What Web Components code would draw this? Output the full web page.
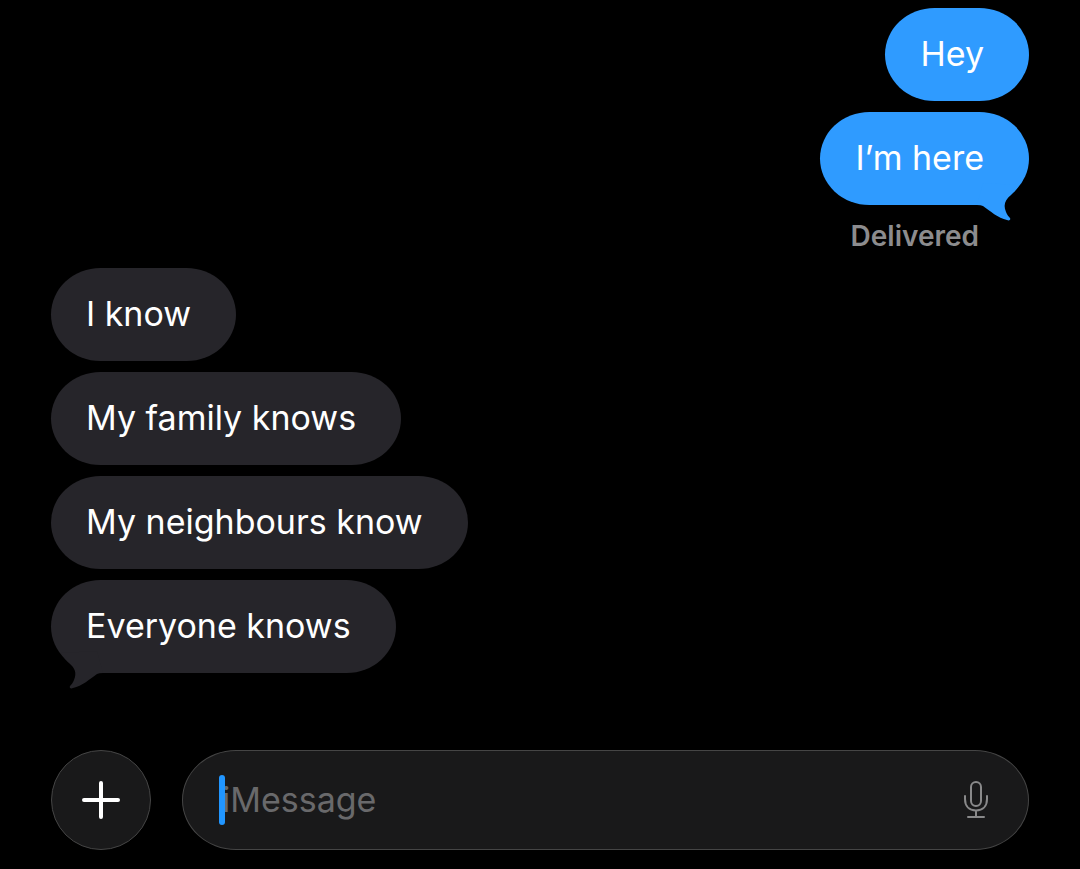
<!DOCTYPE html>
<html lang="en">
<head>
<meta charset="utf-8">
<meta name="viewport" content="width=device-width, initial-scale=1">
<title>Messages</title>
<style>
    body {
        margin: 0;
        background: #000;
        color: #fff;
        font-family: Inter, "Liberation Sans", sans-serif;
    }
</style>
</head>
<body>
<chat-screen>
    <message-group side="sent" status="Delivered">
        <message-bubble side="sent">Hey</message-bubble>
        <message-bubble side="sent" tail>I’m here</message-bubble>
    </message-group>
    <message-group side="received">
        <message-bubble>I know</message-bubble>
        <message-bubble>My family knows</message-bubble>
        <message-bubble>My neighbours know</message-bubble>
        <message-bubble tail>Everyone knows</message-bubble>
    </message-group>
    <message-composer slot="footer"></message-composer>
</chat-screen>

<script>
class ChatScreen extends HTMLElement {
    constructor() {
        super();
        this.attachShadow({mode: 'open'}).innerHTML =
            `<style>
                :host {
                    display: flex;
                    flex-direction: column;
                    justify-content: space-between;
                    gap: 32px;
                    box-sizing: border-box;
                    min-height: 100vh;
                    padding: 8px 51px 19px;
                }

                main {
                    display: flex;
                    flex-direction: column;
                    gap: 15px;
                }
            </style>
            <main><slot></slot></main>
            <slot name="footer"></slot>`;
    }
}

class MessageGroup extends HTMLElement {
    constructor() {
        super();
        this.attachShadow({mode: 'open'});
    }

    connectedCallback() {
        const status = this.getAttribute('status');

        this.shadowRoot.innerHTML =
            `<style>
                :host {
                    display: flex;
                    flex-direction: column;
                    align-items: flex-start;
                    gap: 11px;
                }

                :host([side="sent"]) {
                    align-items: flex-end;
                }

                p {
                    margin: 0;
                    padding: 4px 50px 0 0;
                    font-size: 28px;
                    font-weight: 600;
                    line-height: 33px;
                    color: #8c8c8e;
                }
            </style>
            <slot></slot>
            ${status ? `<p>${status}</p>` : ''}`;
    }
}

class MessageBubble extends HTMLElement {
    constructor() {
        super();
        this.attachShadow({mode: 'open'});
        this.shadowRoot.innerHTML =
            `<style>
                :host {
                    --fill: #26252a;
                    display: block;
                    position: relative;
                    box-sizing: border-box;
                    padding: 26px 45px 27px 35px;
                    border-radius: 50px / 47px;
                    background: var(--fill);
                    font-size: 34px;
                    line-height: 40px;
                }

                :host([side="sent"]) {
                    --fill: #2f9bff;
                }

                svg {
                    display: none;
                    position: absolute;
                    left: 10px;
                    bottom: -16px;
                    fill: var(--fill);
                }

                :host([tail]) svg {
                    display: block;
                }

                :host([side="sent"]) svg {
                    left: auto;
                    right: 10px;
                    transform: scaleX(-1);
                }
            </style>
            <slot></slot>
            <svg width="44" height="38" viewBox="0 0 44 38" aria-hidden="true">
                <path d="M0 2 C3 7 5 9 8 12 C14 17 16 22 13 29 C12 32 10 34 9 35 C8 37 10 38 12 37 C21 35 29 28 36 23 Q38 22 42 22 L36 0 Z"/>
            </svg>`;
    }
}

class MessageComposer extends HTMLElement {
    constructor() {
        super();
        this.attachShadow({mode: 'open'});
        this.shadowRoot.innerHTML =
            `<style>
                :host {
                    display: flex;
                    gap: 31px;
                }

                button {
                    display: grid;
                    place-items: center;
                    padding: 0;
                    border: 0;
                    background: none;
                    color: inherit;
                }

                svg {
                    display: block;
                    fill: none;
                    stroke: currentColor;
                    stroke-linecap: round;
                }

                .add,
                .field {
                    box-sizing: border-box;
                    height: 100px;
                    border: 1px solid #454545;
                    background: #19191a;
                }

                .add {
                    flex: none;
                    width: 100px;
                    border-radius: 50%;
                }

                .field {
                    flex: 1;
                    display: flex;
                    align-items: center;
                    position: relative;
                    min-width: 0;
                    padding: 0 38px 0 39px;
                    border-radius: 54px / 50px;
                }

                .caret {
                    position: absolute;
                    left: 36px;
                    width: 6px;
                    height: 50px;
                    border-radius: 3px;
                    background: #2196ff;
                }

                input {
                    flex: 1;
                    min-width: 0;
                    padding: 0;
                    border: 0;
                    outline: 0;
                    background: none;
                    color: inherit;
                    caret-color: transparent;
                    font: inherit;
                    font-size: 34px;
                    line-height: 40px;
                }

                input::placeholder {
                    color: #69696b;
                    opacity: 1;
                }

                .mic {
                    color: #89898a;
                }
            </style>
            <button class="add" type="button" aria-label="Add">
                <svg width="40" height="40" viewBox="0 0 40 40" stroke-width="4">
                    <path d="M20 3V37M3 20H37"/>
                </svg>
            </button>
            <div class="field">
                <input type="text" placeholder="iMessage" aria-label="iMessage">
                <span class="caret"></span>
                <button class="mic" type="button" aria-label="Dictate">
                    <svg width="28" height="38" viewBox="0 0 28 38" stroke-width="2">
                        <rect x="9" y="1" width="10" height="24" rx="5"/>
                        <path d="M3 15V18C3 25 7 29.500 14 29.500S25 25 25 18V15M14 29.500V36M6 36H22"/>
                    </svg>
                </button>
            </div>`;
    }
}

customElements.define('chat-screen', ChatScreen);
customElements.define('message-group', MessageGroup);
customElements.define('message-bubble', MessageBubble);
customElements.define('message-composer', MessageComposer);
</script>
</body>
</html>
